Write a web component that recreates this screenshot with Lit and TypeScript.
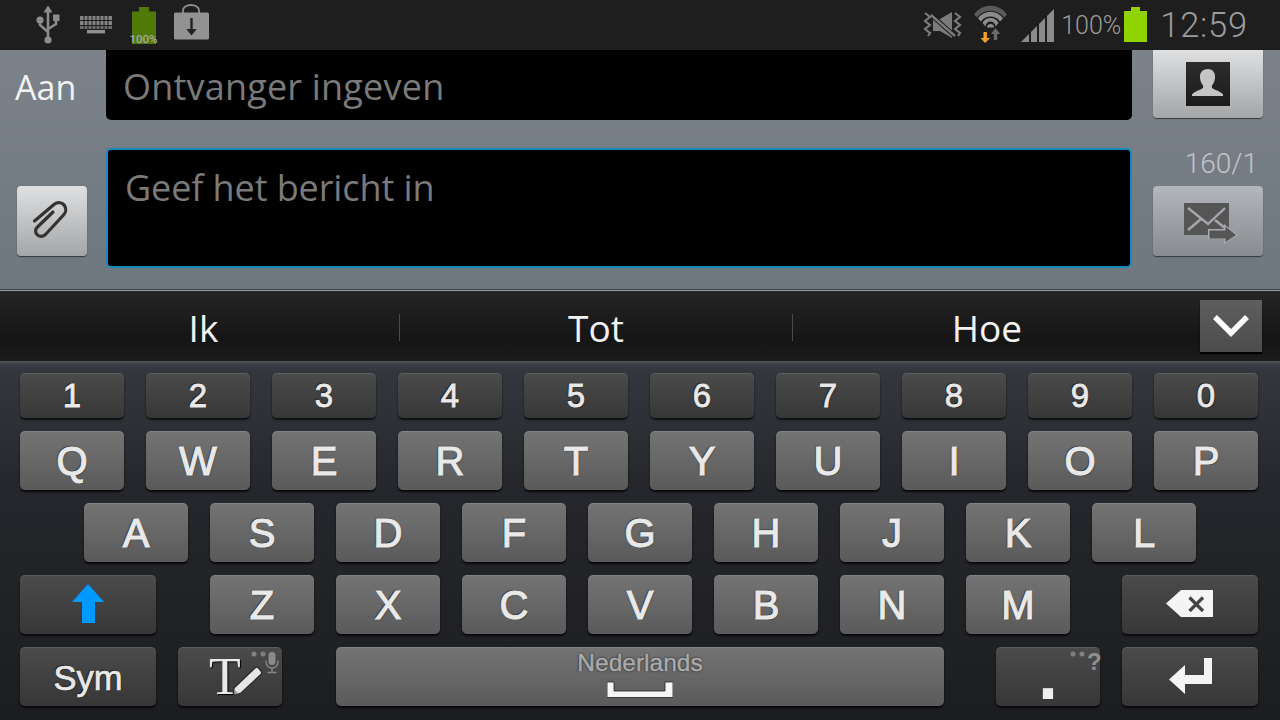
import { LitElement, html, css, svg } from "lit";
import { customElement } from "lit/decorators.js";

const usb = svg`<svg class="ico" width="36" height="50" viewBox="34 0 36 50"><g fill="none" stroke="#8c8c8c" stroke-width="2.6"><path d="M48 10V40"/><path d="M40 20V25L48 32"/><path d="M56 20V24L48 29"/></g><g fill="#8c8c8c"><path d="M48 5.5l4.5 7h-9z"/><circle cx="48" cy="40" r="3.6"/><circle cx="40" cy="20" r="3.6"/><rect x="53" y="14.5" width="6.5" height="6.5"/></g></svg>`;
const kb = svg`<svg class="ico" width="52" height="50" viewBox="70 0 52 50"><g fill="#8f8f8f"><rect x="80" y="16" width="32" height="4" opacity=".9"/><rect x="80" y="21" width="32" height="4" opacity=".9"/><rect x="80" y="26" width="32" height="3" opacity=".7"/><rect x="87" y="30" width="18" height="3.4"/></g><g stroke="#1e1e1e" stroke-width="1"><path d="M84 16V29M88 16V29M92 16V29M96 16V29M100 16V29M104 16V29M108 16V29"/></g></svg>`;
const batS = svg`<svg class="ico" width="44" height="50" viewBox="122 0 44 50"><path fill="#4f7a08" d="M139 7h10v4.5h7V44h-24V11.500h7z"/><text x="143.500" y="42.500" text-anchor="middle" font-family="Roboto, sans-serif" font-size="11.500" font-weight="500" fill="#a9a9a9">100%</text></svg>`;
const bag = svg`<svg class="ico" width="48" height="50" viewBox="166 0 48 50"><path fill="none" stroke="#8f8f8f" stroke-width="1.800" d="M183 13V10.500a8 5.500 0 0 1 16 0V13"/><rect x="174" y="12.500" width="35" height="27" rx="1.500" fill="#929292"/><path fill="#222" d="M190.300 18h2.400v11h4l-5.200 6.500-5.200-6.500h4z"/></svg>`;
const mute = svg`<svg class="ico" width="50" height="50" viewBox="920 0 50 50"><path fill="#7b7b7b" d="M934 19h7l12-7v26l-12-7h-7z"/><path stroke="#1e1e1e" stroke-width="4.500" d="M930 13L958 38"/><path stroke="#7b7b7b" stroke-width="2.400" d="M932 15L956 36"/><g fill="none" stroke="#7b7b7b" stroke-width="2.200"><path d="M926 13l5 4-5 4 5 4-5 4 5 4-2 3"/><path d="M956 13l5 4-5 4 5 4-5 4 5 4-2 3"/></g></svg>`;
const wifi = svg`<svg class="ico" width="45" height="50" viewBox="970 0 45 50"><path fill="#5a5a5a" d="M975 14.500a20 20 0 0 1 33 0l-3 3a17 17 0 0 0-27 0z"/><path fill="#8c8c8c" d="M979 18.500a15 15 0 0 1 25 0l-3 3a11.500 11.500 0 0 0-19 0z"/><path fill="#8c8c8c" d="M983.500 23a9 9 0 0 1 16 0l-3 3.500a5 5 0 0 0-10 0z"/><path fill="#8c8c8c" d="M988 27.500a3.500 3.500 0 0 1 7 0h-7z"/><path fill="#6a6a6a" d="M996.500 28l4.700 6h-3v6h-3.400v-6h-3z"/><path fill="#f5a02a" d="M984.500 32h3.400v6h3.100l-4.800 5-4.800-5h3.100z"/></svg>`;
const signal = svg`<svg class="ico" width="45" height="50" viewBox="1015 0 45 50"><g fill="#8a8a8a"><path d="M1022 42l8-8v8z"/><path d="M1032 32l6-6v16h-6z"/><path d="M1040 24l6-6v24h-6z"/><path d="M1048 16l7-7v33h-7z"/></g></svg>`;
const bat = svg`<svg class="ico" width="26" height="50" viewBox="1124 0 26 50"><path fill="#8fd400" d="M1132 7h9v4h7v31h-23V11h7z"/></svg>`;
const contact = svg`<svg width="44" height="44" viewBox="0 0 44 44"><defs><linearGradient id="cg" x1="0" y1="0" x2="0" y2="1"><stop offset="0" stop-color="#2c2c2c"/><stop offset="1" stop-color="#1c1c1c"/></linearGradient></defs><rect width="44" height="44" fill="url(#cg)"/><path fill="#c4c4c4" d="M22 7c5 0 7.500 4 7 9-.3 3-1.500 5.500-3 7.500-.6 2 0 3 3 4.300 4 1.600 6.500 2.600 8 4.700v1.500H6v-1.500c1.500-2.100 4-3.100 8-4.700 3-1.300 3.600-2.300 3-4.300-1.500-2-2.700-4.500-3-7.500-.5-5 2-9 8-9z"/></svg>`;
const clip = svg`<svg width="70" height="70" viewBox="17 186 70 70"><path fill="none" stroke="#333" stroke-width="3.200" stroke-linecap="round" stroke-linejoin="round" d="M34.500 221L54 204.500c4-3 8.500-2 10.500 1 2 3 1.500 7-1 9.500L45.500 234.500c-3 2.500-6.500 2.500-8.500 0-2-2.500-1.500-5.500.5-7.500L53 212"/></svg>`;
const send = svg`<svg width="110" height="70" viewBox="1153 186 110 70"><rect x="1184" y="203" width="45" height="32" fill="#555"/><path fill="none" stroke="#a5a8ac" stroke-width="2.400" d="M1188 208L1208 224L1225 208M1188 230L1201 219M1215 220L1225 228"/><path fill="#a8abaf" d="M1208 229h16v-5l14 11-14 9v-5h-16z"/><path fill="#555" d="M1209.500 230.500h16v-4l10.500 8.500-10.500 7v-3.500h-16z"/></svg>`;
const chevron = svg`<svg width="62" height="52" viewBox="1200 300 62 52"><path fill="none" stroke="#fff" stroke-width="5.500" d="M1215 317L1231 333L1247 317"/></svg>`;
const shift = svg`<svg width="136" height="59" viewBox="20 575 136 59"><path fill="#0099ff" d="M88 583l16 18h-9v21H82v-21h-10z"/></svg>`;
const backspace = svg`<svg width="136" height="59" viewBox="1122 575 136 59"><path fill="#f4f4f4" d="M1166 602.500L1181 589H1213V616H1181z"/><path stroke="#444" stroke-width="3.200" d="M1189.500 596.500L1203 610M1203 596.500L1189.500 610"/></svg>`;
const enter = svg`<svg width="136" height="59" viewBox="1122 647 136 59"><path fill="#f4f4f4" d="M1204 657h8v26h-27v10l-16-14.500 16-14.500v10h19z"/></svg>`;
const pen = svg`<svg class="pen" width="32" height="38" viewBox="0 0 32 38"><path fill="#e6e6e6" stroke="#2a2a2a" stroke-width="1.200" d="M2 29L23 9c1.300-1.200 2.500-1.200 3.500 0l2.500 3c1 1.200 1 2.200 0 3.300L9 34l-7 2z"/><path fill="#999" d="M2.500 31l4 3.500-4 1z"/></svg>`;
const mic = svg`<svg class="mic" width="14" height="24" viewBox="0 0 14 24"><rect x="3.500" y="1" width="7" height="13" rx="3.500" fill="#8a8a8a"/><path fill="none" stroke="#8a8a8a" stroke-width="1.300" d="M1 9.500v1.500a6 6 0 0 0 12 0V9.500M7 17v4M2.500 21.500h9"/></svg>`;
const dots = svg`<svg class="dots" width="16" height="6" viewBox="0 0 16 6"><circle cx="3" cy="3" r="2.500" fill="#7f7f7f"/><circle cx="12" cy="3" r="2.500" fill="#7f7f7f"/></svg>`;
const bracket = svg`<svg class="bracket" width="66" height="17" viewBox="607 681 66 17"><path fill="#f6f6f6" stroke="#222" stroke-width=".8" d="M607 682h7v9h51v-9h8v15.500h-66z"/></svg>`;

@customElement("app-root")
export class AppRoot extends LitElement {
  static styles = css`
    :host { display: block; width: 1280px; height: 720px; overflow: hidden; background: #1e2024; font-family: "Open Sans", sans-serif; }
    svg { display: block; flex: none; }
    .status { height: 50px; background: #1e1e1e; display: flex; align-items: center; padding-left: 34px; box-sizing: border-box; }
    .right { margin-left: auto; display: flex; align-items: center; padding-right: 32px; color: #9c9c9c; font-family: Roboto, sans-serif; }
    .pct { font-size: 25px; font-weight: 300; width: 64px; padding-left: 2px; box-sizing: border-box; }
    .time { font-size: 34.500px; font-weight: 300; margin-left: 11px; letter-spacing: .8px; }

    .compose { height: 240px; box-sizing: border-box; background: linear-gradient(#7b8289, #6f777e); border-bottom: 1px solid #3c4044; display: flex; flex-direction: column; gap: 28px; }
    .row { display: flex; }
    .row.top { height: 70px; }
    .lead { width: 106px; flex: none; }
    .aan { font-size: 34px; color: #f2f2f2; padding-left: 15px; line-height: 74px; box-sizing: border-box; }
    .field { width: 1026px; flex: none; background: #000; box-sizing: border-box; color: #7a7a7a; font-size: 36px; }
    .to { height: 70px; border-radius: 0 0 5px 5px; padding-left: 17px; line-height: 74px; letter-spacing: .2px; }
    .body { height: 120px; border: 2px solid #148cc0; border-radius: 5px; padding: 15px 17px; line-height: 46px; letter-spacing: -.1px; }
    .tail { margin-left: 21px; width: 110px; flex: none; }
    .btn { width: 110px; height: 68px; background: linear-gradient(#dfe0e2, #a4a5a7); border-radius: 0 0 4px 4px; box-shadow: 0 1px 1px rgba(0,0,0,.55); display: flex; align-items: center; justify-content: center; }
    .lead.bottom { display: flex; align-items: flex-end; padding: 0 0 12px 17px; box-sizing: border-box; }
    .btn.clip { width: 70px; height: 70px; border-radius: 4px; }
    .btn.send { height: 70px; border-radius: 4px; background: linear-gradient(#b3b6bb, #888c91); }
    .tail.col { display: flex; flex-direction: column; justify-content: flex-end; padding-bottom: 12px; box-sizing: border-box; }
    .count { color: #c2c5c8; font-family: Roboto, sans-serif; font-size: 28px; text-align: right; padding-right: 5px; line-height: 32px; margin-bottom: 6px; font-weight: 300; }

    .suggest { height: 71px; box-sizing: border-box; border-top: 1px solid #9a9c9e; background: linear-gradient(#242424, #151515 70%, #1b1b1b); display: flex; align-items: center; padding: 3px 0 0 8px; color: #f2f2f2; font-size: 37px; position: relative; }
    .word { width: 392px; flex: none; text-align: center; box-sizing: border-box; height: 27px; line-height: 27px; display: flex; align-items: center; justify-content: center; border-right: 1px solid #4a4a4a; }
    .word.mid { width: 393px; }
    .word.last { border: none; width: 388px; }
    .more { position: absolute; left: 1200px; top: 9px; width: 62px; height: 52px; background: linear-gradient(#5e5e5e, #4c4c4c); box-shadow: 0 2px 1px #000; }

    .keyboard { height: 359px; box-sizing: border-box; background: linear-gradient(#54575b 0, #3a3e44 3px, #33373d 10px, #25272c 35%, #1c1d20 100%); padding-top: 12px; display: flex; flex-direction: column; gap: 13px; font-family: "Liberation Sans", sans-serif; }
    .keys { display: flex; gap: 22px; padding-left: 20px; height: 59px; }
    .keys.nums { height: 45px; }
    .keys.home { padding-left: 84px; }
    .key { width: 104px; flex: none; border-radius: 5px; display: flex; align-items: center; justify-content: center; position: relative; box-sizing: border-box; padding-top: 1px; color: #e9e9e9; font-size: 40px; -webkit-text-stroke: 1.1px #e9e9e9; box-shadow: 0 2px 2px rgba(0,0,0,.75), inset 0 1px 0 rgba(255,255,255,.1); text-shadow: -1px -1px 1px rgba(0,0,0,.6), 1px 1px 1px rgba(0,0,0,.35); background: linear-gradient(#747474, #5a5a5a); }
    .dark { background: linear-gradient(#4b4b4b, #373737); }
    .nums .key { font-size: 33px; -webkit-text-stroke: .8px #e9e9e9; }
    .wide { width: 136px; }
    .space { width: 608px; }
    .gap-l { margin-left: 32px; }
    .gap-r { margin-left: 30px; }
    .key.sym { font-size: 34.500px; padding-top: 3px; -webkit-text-stroke: .7px #e9e9e9; }
    .t { font-family: "Liberation Serif", serif; font-size: 52px; justify-content: flex-start; padding: 0 0 0 31px; -webkit-text-stroke: 0; text-shadow: 1px 1px 1px #000; }
    .pen { position: absolute; left: 54px; top: 12px; }
    .mic { position: absolute; left: 87px; top: 4px; }
    .dots { position: absolute; left: 73px; top: 4px; }
    .period .dots { left: 74px; top: 4px; }
    .q { font-size: 24px; position: absolute; left: 91px; top: 1px; line-height: 28px; color: #8f8f8f; font-weight: 700; -webkit-text-stroke: 0; text-shadow: none; }
    .pt { position: absolute; left: 42px; top: -9px; font-size: 72px; line-height: 72px; font-weight: 700; color: #eee; -webkit-text-stroke: 0; text-shadow: none; }
    .sp { flex-direction: column; justify-content: flex-start; padding-top: 0; }
    .lang { font-size: 24.500px; line-height: 28px; margin-top: 2px; color: #ababab; -webkit-text-stroke: .5px #ababab; text-shadow: 0 0 2px #222, 0 0 2px #222; }
    .bracket { margin-top: 4px; }
  `;

  private letters(s: string) {
    return [...s].map((c) => html`<div class="key">${c}</div>`);
  }

  render() {
    return html`
      <div class="status">
        ${usb}${kb}${batS}${bag}
        <div class="right">${mute}${wifi}${signal}<span class="pct">100%</span>${bat}<span class="time">12:59</span></div>
      </div>
      <div class="compose">
        <div class="row top">
          <div class="lead aan">Aan</div>
          <div class="field to">Ontvanger ingeven</div>
          <div class="tail"><div class="btn">${contact}</div></div>
        </div>
        <div class="row">
          <div class="lead bottom"><div class="btn clip">${clip}</div></div>
          <div class="field body">Geef het bericht in</div>
          <div class="tail col"><div class="count">160/1</div><div class="btn send">${send}</div></div>
        </div>
      </div>
      <div class="suggest">
        <div class="word">Ik</div><div class="word mid">Tot</div><div class="word last">Hoe</div>
        <div class="more">${chevron}</div>
      </div>
      <div class="keyboard">
        <div class="keys nums">${[..."1234567890"].map((c) => html`<div class="key dark">${c}</div>`)}</div>
        <div class="keys">${this.letters("QWERTYUIOP")}</div>
        <div class="keys home">${this.letters("ASDFGHJKL")}</div>
        <div class="keys">
          <div class="key dark wide">${shift}</div>
          <div class="key gap-l">Z</div>${this.letters("XCVBNM")}
          <div class="key dark wide gap-r">${backspace}</div>
        </div>
        <div class="keys">
          <div class="key dark wide sym">Sym</div>
          <div class="key dark t">T${pen}${dots}${mic}</div>
          <div class="key space gap-l sp"><span class="lang">Nederlands</span>${bracket}</div>
          <div class="key dark gap-r period"><span class="pt">.</span>${dots}<span class="q">?</span></div>
          <div class="key dark wide">${enter}</div>
        </div>
      </div>
    `;
  }
}
